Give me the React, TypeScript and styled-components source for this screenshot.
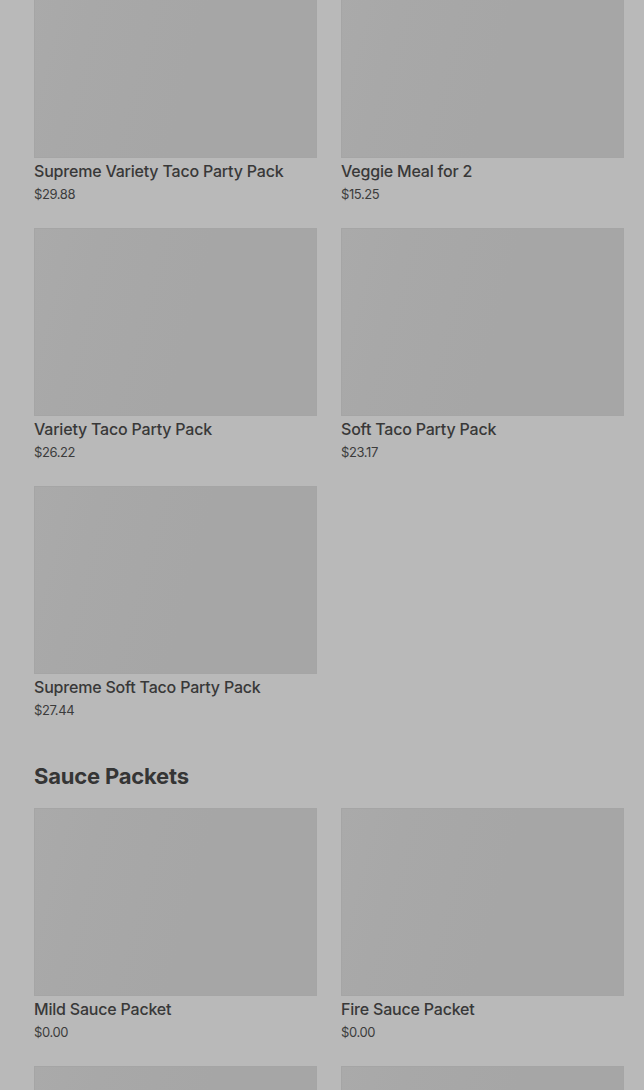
import React from "react";
import styled, { createGlobalStyle } from "styled-components";

const Global = createGlobalStyle`
  html, body { margin: 0; padding: 0; background: #b9b9b9; overflow: hidden; }
  body { font-family: Inter, "Liberation Sans", Arial, sans-serif; }
`;

const Page = styled.div`
  width: 644px;
  height: 1090px;
  overflow: hidden;
  background: #b9b9b9;
`;

const Content = styled.div`
  margin-top: -30px;
  padding: 0 20px 0 34px;
  display: flex;
  flex-direction: column;
`;

const Section = styled.section<{ $first?: boolean }>`
  display: flex;
  flex-direction: column;
  margin-top: ${(p) => (p.$first ? "0" : "43px")};
`;

const Heading = styled.h2`
  margin: 0 0 18px;
  font-size: 22px;
  line-height: 28px;
  font-weight: 700;
  color: #353535;
  letter-spacing: -0.2px;
`;

const Grid = styled.div`
  display: grid;
  grid-template-columns: 283px 283px;
  column-gap: 24px;
  row-gap: 25px;
`;

const Card = styled.div`
  display: flex;
  flex-direction: column;
`;

const Thumb = styled.div`
  height: 188px;
  box-sizing: border-box;
  border: 1px solid #a5a5a5;
  background: linear-gradient(105deg, #aaaaaa 0%, #a8a8a8 20%, #a6a6a6 55%, #a6a6a6 100%);
`;

const Title = styled.div`
  margin-top: 3px;
  font-size: 16px;
  line-height: 20px;
  font-weight: 500;
  color: #383838;
  letter-spacing: -0.2px;
  white-space: nowrap;
`;

const Price = styled.div`
  margin-top: 4px;
  font-size: 13px;
  line-height: 18px;
  font-weight: 400;
  color: #3c3c3c;
  letter-spacing: -0.4px;
`;

type Item = { name: string; price: string };

const packs: Item[] = [
  { name: "Supreme Variety Taco Party Pack", price: "$29.88" },
  { name: "Veggie Meal for 2", price: "$15.25" },
  { name: "Variety Taco Party Pack", price: "$26.22" },
  { name: "Soft Taco Party Pack", price: "$23.17" },
  { name: "Supreme Soft Taco Party Pack", price: "$27.44" },
];

const sauces: Item[] = [
  { name: "Mild Sauce Packet", price: "$0.00" },
  { name: "Fire Sauce Packet", price: "$0.00" },
  { name: "Hot Sauce Packet", price: "$0.00" },
  { name: "Diablo Sauce Packet", price: "$0.00" },
];

const Product = ({ item }: { item: Item }) => (
  <Card>
    <Thumb />
    <Title>{item.name}</Title>
    <Price>{item.price}</Price>
  </Card>
);

export default function App() {
  return (
    <Page>
      <Global />
      <Content>
        <Section $first>
          <Grid>
            {packs.map((p) => (
              <Product key={p.name} item={p} />
            ))}
          </Grid>
        </Section>
        <Section>
          <Heading>Sauce Packets</Heading>
          <Grid>
            {sauces.map((p) => (
              <Product key={p.name} item={p} />
            ))}
          </Grid>
        </Section>
      </Content>
    </Page>
  );
}
